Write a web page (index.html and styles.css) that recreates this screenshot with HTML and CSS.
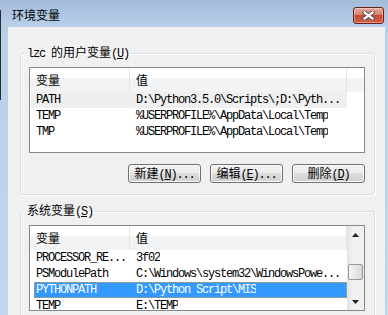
FILE: index.html
```html
<!DOCTYPE html>
<html>
	<head>
		<meta charset="utf-8">
		<title>环境变量</title>
		<link rel="stylesheet" href="styles.css">
	</head>
	<body>
		<div class="chuangkou">
			<!-- 标题栏 -->
			<div class="biaoti">
				<span class="biaoti-wen">环境变量</span>
				<span class="guanbi">
					<svg width="13" height="9" viewBox="0 0 13 9">
						<path d="M2.5 1.5 L10.5 7.5 M10.5 1.5 L2.5 7.5" stroke="#4a4a4a" stroke-width="4" stroke-linecap="square"/>
						<path d="M2.5 1.5 L10.5 7.5 M10.5 1.5 L2.5 7.5" stroke="#fff" stroke-width="2.2" stroke-linecap="square"/>
					</svg>
				</span>
			</div>
			<div class="neirong">
				<!-- 用户变量 -->
				<fieldset class="zu">
					<legend><span class="xi">lzc </span>的用户变量<span class="xi">(<u>U</u>)</span></legend>
					<div class="liebiao">
						<div class="liebiao-zhu">
							<div class="biaotou"><div class="tou1">变量</div><div class="tou2">值</div><div class="tou3"></div></div>
							<div class="hang xuanzhong-hui"><span class="lie1">PATH</span><span class="lie2">D:\Python3.5.0\Scripts\;D:\Pyth...</span></div>
							<div class="hang"><span class="lie1">TEMP</span><span class="lie2">%USERPROFILE%\AppData\Local\Temp</span></div>
							<div class="hang"><span class="lie1">TMP</span><span class="lie2">%USERPROFILE%\AppData\Local\Temp</span></div>
						</div>
					</div>
					<div class="anniu-zu">
						<button class="anniu" type="button">新建<span class="xi">(<u>N</u>)...</span></button>
						<button class="anniu" type="button">编辑<span class="xi">(<u>E</u>)...</span></button>
						<button class="anniu" type="button">删除<span class="xi">(<u>D</u>)</span></button>
					</div>
				</fieldset>
				<!-- 系统变量 -->
				<fieldset class="zu zu-xitong">
					<legend>系统变量<span class="xi">(<u>S</u>)</span></legend>
					<div class="liebiao">
						<div class="liebiao-zhu zhai">
							<div class="biaotou"><div class="tou1">变量</div><div class="tou2">值</div><div class="tou3"></div></div>
							<div class="hang"><span class="lie1">PROCESSOR_RE...</span><span class="lie2">3f02</span></div>
							<div class="hang"><span class="lie1">PSModulePath</span><span class="lie2">C:\Windows\system32\WindowsPowe...</span></div>
							<div class="hang xuanzhong-lan"><span class="lie1">PYTHONPATH</span><span class="lie2">D:\Python Script\MIS</span></div>
							<div class="hang"><span class="lie1">TEMP</span><span class="lie2">E:\TEMP</span></div>
						</div>
						<div class="gundongtiao">
							<div class="jiantou">
								<svg width="7" height="4" viewBox="0 0 7 4"><polygon points="0,4 3.5,0 7,4" fill="#1e1e1e"/></svg>
							</div>
							<div class="guidao"><div class="huakuai" style="margin-top:21px"></div></div>
							<div class="jiantou">
								<svg width="7" height="4" viewBox="0 0 7 4"><polygon points="0,0 7,0 3.5,4" fill="#1e1e1e"/></svg>
							</div>
						</div>
					</div>
				</fieldset>
			</div>
		</div>
	</body>
</html>
```

FILE: styles.css
```css
body {
	margin: 0;
	padding: 0;
	font-family: "Noto Sans CJK SC", sans-serif;
	font-size: 12px;
	color: #000;
}
.chuangkou {
	width: 388px;
	height: 315px;
	overflow: hidden;
	display: flex;
	flex-direction: column;
	background:
		linear-gradient(to bottom, transparent 10px, #2b2b2b 10px, #2b2b2b 100px, transparent 100px) 0 0 / 1px 100% no-repeat,
		linear-gradient(to bottom, #a2bcda 0, #b8cfe9 27px, #c2d7ee 100%);
}
.biaoti {
	height: 27px;
	box-sizing: border-box;
	padding: 3px 0 0 12px;
	display: flex;
	align-items: center;
	justify-content: space-between;
	flex-shrink: 0;
}
.biaoti-wen {
	line-height: 16px;
}
.guanbi {
	width: 31px;
	height: 17px;
	box-sizing: border-box;
	margin-right: 4px;
	border: 1px solid #6e1f14;
	border-radius: 3px;
	background: linear-gradient(to bottom, #e9ab9c 0, #d8806c 45%, #c64a32 50%, #cd6248 100%);
	box-shadow: inset 0 0 0 1px rgba(255, 255, 255, 0.35);
	display: flex;
	align-items: center;
	justify-content: center;
}
.guanbi svg {
	display: block;
}
.neirong {
	flex: 1;
	margin: 0 3px 0 8px;
	background-color: #f0f0f0;
	overflow: hidden;
}
.zu {
	margin: 18px 10px 0 12px;
	padding: 6px 9px 11px 8px;
	border: 1px solid #d5dfe5;
	border-radius: 3px;
	box-shadow: inset 1px 1px 0 #fff, 1px 1px 0 #fff;
	min-width: 0;
}
.zu-xitong {
	margin-top: 8px;
}
.zu legend {
	margin-left: -5px;
	padding: 0 3px;
	line-height: 14px;
}
.xi {
	font-family: "Liberation Mono", monospace;
	font-size: 12px;
	letter-spacing: -1.2px;
}
.liebiao {
	height: 86px;
	box-sizing: border-box;
	border: 1px solid #828790;
	background-color: #fff;
	display: flex;
	overflow: hidden;
}
.liebiao-zhu {
	flex: 1;
	min-width: 0;
}
.liebiao-zhu.zhai {
	flex: 0 0 317px;
}
.biaotou {
	height: 24px;
	display: flex;
	background: linear-gradient(to bottom, #fff 0, #fff 10px, #f2f3f5 10px, #f2f3f5 100%);
	line-height: 24px;
}
.tou1 {
	width: 100px;
	box-sizing: border-box;
	padding-left: 6px;
	border-right: 1px solid #e3e5e8;
}
.tou2 {
	width: 217px;
	box-sizing: border-box;
	padding-left: 6px;
	border-right: 1px solid #e3e5e8;
}
.tou3 {
	flex: 1;
}
.hang {
	display: flex;
	width: 316px;
	height: 16px;
	margin-left: 1px;
	box-sizing: border-box;
	font-family: "Liberation Mono", monospace;
	font-size: 12px;
	letter-spacing: -1.2px;
	line-height: 16px;
	white-space: nowrap;
}
.hang .lie1 {
	width: 99px;
	box-sizing: border-box;
	padding-left: 5px;
	flex-shrink: 0;
}
.hang .lie2 {
	padding-left: 6px;
	overflow: hidden;
}
.xuanzhong-hui {
	background-color: #efefef;
}
.xuanzhong-lan {
	width: 313px;
	margin-left: 4px;
	background-color: #3399ff;
	color: #fff;
	outline: 1px dotted #e0a040;
	outline-offset: -1px;
}
.xuanzhong-lan .lie1 {
	width: 96px;
	padding-left: 2px;
}
.gundongtiao {
	width: 17px;
	display: flex;
	flex-direction: column;
	background: linear-gradient(to right, #e4e4e4, #f2f2f2 40%, #f0f0f0);
}
.jiantou {
	height: 17px;
	display: flex;
	align-items: center;
	justify-content: center;
	flex-shrink: 0;
}
.jiantou svg {
	display: block;
}
.guidao {
	flex: 1;
}
.huakuai {
	width: 15px;
	height: 16px;
	margin-left: 1px;
	box-sizing: border-box;
	border: 1px solid #979797;
	border-radius: 2px;
	background: linear-gradient(to right, #f4f4f4, #e6e6e6 50%, #d8d8d8);
}
.anniu-zu {
	display: flex;
	justify-content: flex-end;
	gap: 9px;
	margin-top: 11px;
}
.anniu {
	width: 73px;
	height: 19px;
	padding: 0;
	box-sizing: border-box;
	border: 1px solid #707070;
	border-radius: 3px;
	background: linear-gradient(to bottom, #f2f2f2 0, #ebebeb 50%, #dddddd 50%, #cfcfcf 100%);
	box-shadow: inset 0 0 0 1px #fbfbfb;
	font-family: "Noto Sans CJK SC", sans-serif;
	font-size: 12px;
	line-height: 16px;
	color: #000;
}
```
